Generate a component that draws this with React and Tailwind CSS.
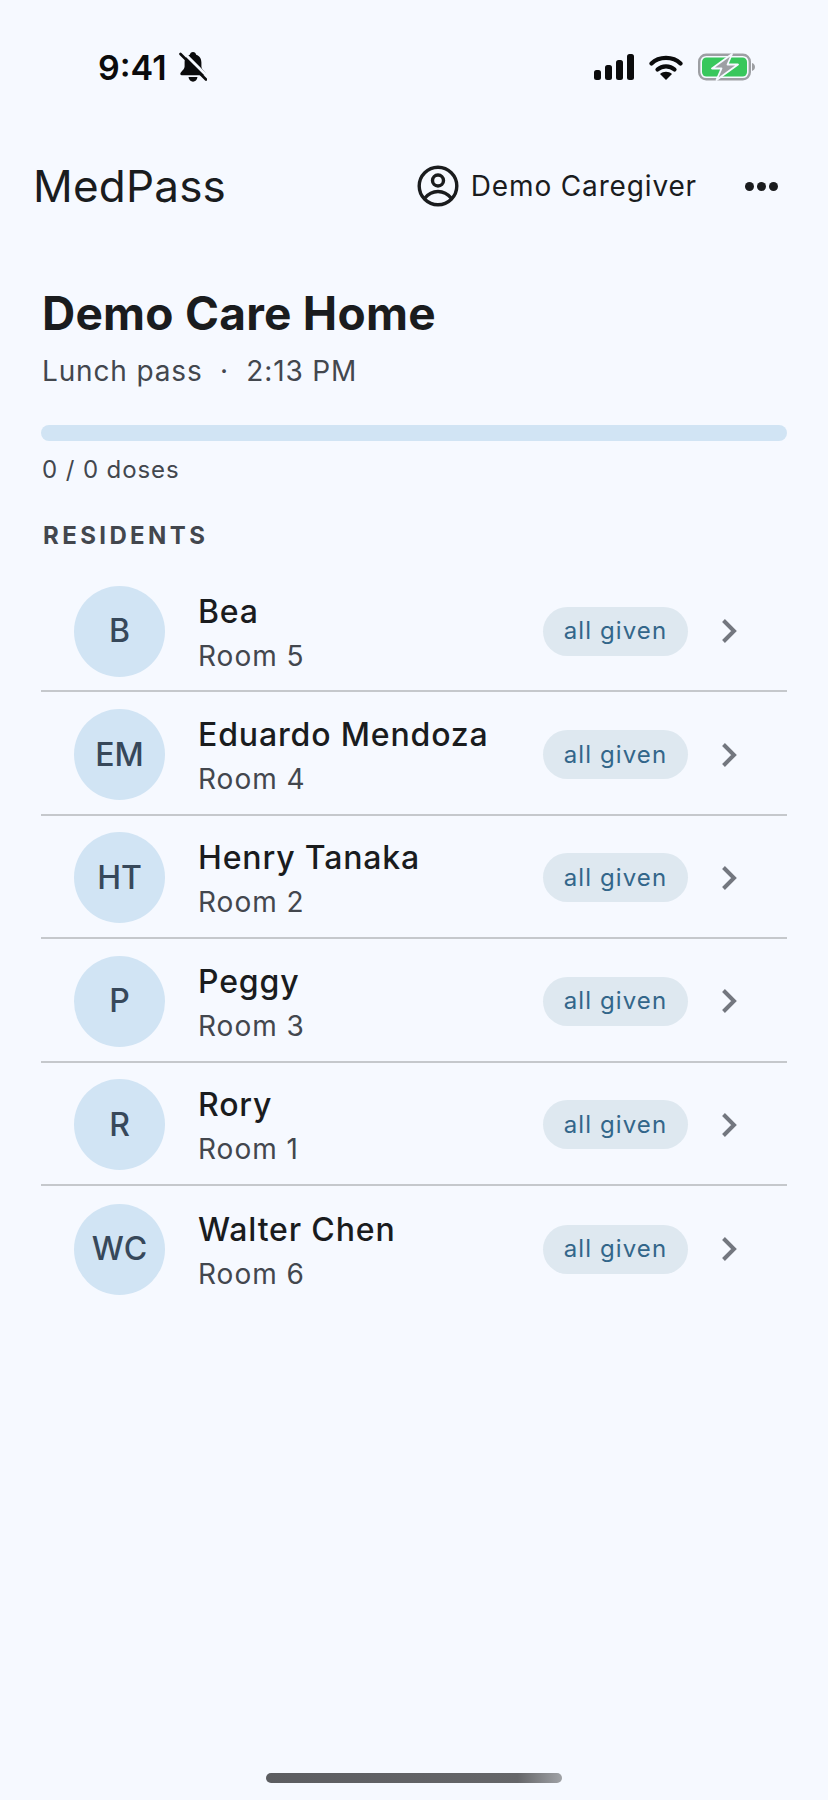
const residents = [
  { initials: 'B', name: 'Bea', room: 'Room 5' },
  { initials: 'EM', name: 'Eduardo Mendoza', room: 'Room 4' },
  { initials: 'HT', name: 'Henry Tanaka', room: 'Room 2' },
  { initials: 'P', name: 'Peggy', room: 'Room 3' },
  { initials: 'R', name: 'Rory', room: 'Room 1' },
  { initials: 'WC', name: 'Walter Chen', room: 'Room 6' },
];

const BellOff = () => (
  <svg width="28" height="30" viewBox="0 0 28 30" className="ml-[12px]">
    <path d="M14 0c-1.700 0-2.900 1.200-3.200 2.700C7.200 3.900 5.600 7 5.600 10.500v4c0 2-1.800 3.700-3.800 6-1 1.200-.5 2.800 1 2.800h22.400c1.500 0 2-1.600 1-2.800-2-2.300-3.800-4-3.800-6v-4c0-3.500-1.600-6.600-5.200-7.800C16.900 1.200 15.700 0 14 0z" fill="#0b0b0c" />
    <path d="M9.500 25h9c-.4 2.900-2.300 4.700-4.500 4.700S9.900 27.900 9.500 25z" fill="#0b0b0c" />
    <path d="M4 0l26 26" stroke="#f6f9ff" strokeWidth="3" />
    <path d="M1.500 2l25.500 25.500" stroke="#0b0b0c" strokeWidth="2.600" strokeLinecap="round" />
  </svg>
);

const StatusIcons = () => (
  <div className="flex items-center gap-[15px]">
    <svg width="40" height="26" viewBox="0 0 40 26">
      <rect x="0" y="16" width="7" height="10" rx="2.500" fill="#0b0b0c" />
      <rect x="11" y="11" width="7" height="15" rx="2.500" fill="#0b0b0c" />
      <rect x="22" y="6" width="7" height="20" rx="2.500" fill="#0b0b0c" />
      <rect x="33" y="0" width="7" height="26" rx="2.500" fill="#0b0b0c" />
    </svg>
    <svg width="34" height="26" viewBox="0 0 34 26">
      <path d="M2.500 9.500C10 2 24 2 31.500 9.500" fill="none" stroke="#0b0b0c" strokeWidth="4.200" strokeLinecap="round" />
      <path d="M8.500 15.500c4.500-4.300 12.500-4.300 17 0" fill="none" stroke="#0b0b0c" strokeWidth="4.200" strokeLinecap="round" />
      <path d="M17 26l-6-6c3.300-3 8.700-3 12 0z" fill="#0b0b0c" />
    </svg>
    <svg width="57" height="28" viewBox="0 0 57 28">
      <rect x="1.200" y="1.700" width="50.600" height="24.600" rx="7" fill="none" stroke="#9d9fa3" strokeWidth="2.400" />
      <rect x="4" y="4.500" width="45" height="19" rx="4.500" fill="#38c75c" />
      <path d="M54 10c1.800.6 3 2.200 3 4s-1.200 3.400-3 4z" fill="#9d9fa3" />
      <path d="M34 1L14 15.500h9.500L18.500 27 40 11.500H29.500z" fill="#9d9fa3" stroke="#f6f9ff" strokeWidth="1.800" strokeLinejoin="round" />
    </svg>
  </div>
);

const ProfileIcon = () => (
  <svg width="42" height="42" viewBox="0 0 42 42" fill="none" stroke="#1a1c1e" strokeWidth="3.400">
    <circle cx="21" cy="21" r="18.800" />
    <circle cx="21" cy="15.500" r="5.500" />
    <path d="M7.500 33.500C12 28 16 26.500 21 26.500s9 1.500 13.500 7" />
  </svg>
);

const Chevron = () => (
  <svg width="16" height="26" viewBox="0 0 16 26" fill="none">
    <path d="M2.500 2.500L13 13 2.500 23.500" stroke="#73777f" strokeWidth="4" />
  </svg>
);

const ResidentRow = ({ resident, last }) => (
  <div className={`h-[123.400px] flex items-center pt-[3px] pl-[33px] pr-[50px] ${last ? '' : 'border-b-2 border-[#c5c8cc]'}`}>
    <div className="w-[91px] h-[91px] rounded-full bg-[#d1e4f4] flex items-center justify-center text-[32px] font-medium text-[#37485a] shrink-0">
      {resident.initials}
    </div>
    <div className="ml-[33px] pt-[5px] flex-1">
      <div className="text-[32px] leading-[44px] font-medium text-[#1a1c1e] tracking-[0.85px]">{resident.name}</div>
      <div className="text-[28px] leading-[44px] text-[#43474e] tracking-[1px]">{resident.room}</div>
    </div>
    <div className="w-[145px] h-[49px] rounded-full bg-[#dee8f0] flex items-center justify-center text-[24px] text-[#33668a] tracking-[1.100px]">
      all given
    </div>
    <div className="ml-[33px]"><Chevron /></div>
  </div>
);

export default function App() {
  return (
    <div className="w-[828px] h-[1800px] bg-[#f6f9ff] flex flex-col font-['Inter',sans-serif] text-[#1a1c1e]">
      {/* Status bar */}
      <div className="h-[134px] flex items-center justify-between pl-[98px] pr-[73px]">
        <div className="flex items-center">
          <span className="text-[34px] font-semibold text-[#0b0b0c]">9:41</span>
          <BellOff />
        </div>
        <StatusIcons />
      </div>

      {/* App bar */}
      <div className="h-[104px] flex items-center pl-[33px] pr-[50px]">
        <div className="text-[44px] tracking-[0.2px] flex-1">MedPass</div>
        <ProfileIcon />
        <div className="ml-[12px] text-[28px] tracking-[0.85px]">Demo Caregiver</div>
        <div className="ml-[48px] flex gap-[3px]">
          <span className="w-[9px] h-[9px] rounded-full bg-[#1a1c1e]"></span>
          <span className="w-[9px] h-[9px] rounded-full bg-[#1a1c1e]"></span>
          <span className="w-[9px] h-[9px] rounded-full bg-[#1a1c1e]"></span>
        </div>
      </div>

      <div className="px-[41px] pt-[49px]">
        <h1 className="pl-px text-[46px] leading-[52px] font-bold tracking-[0.25px]">Demo Care Home</h1>
        <p className="pl-px mt-[14px] text-[28px] leading-[36px] text-[#43474e] tracking-[0.85px]">Lunch pass &nbsp;·&nbsp; 2:13 PM</p>
        <div className="mt-[36px] h-[16px] rounded-full bg-[#d1e4f4]"></div>
        <p className="pl-px mt-[13px] text-[24px] leading-[32px] text-[#43474e] tracking-[0.9px]">0 / 0 doses</p>
        <p className="pl-[2px] mt-[34px] text-[24px] leading-[32px] font-bold text-[#43474e] tracking-[3.400px]">RESIDENTS</p>
        <div className="mt-[17px]">
          {residents.map((r, i) => (
            <ResidentRow key={r.name} resident={r} last={i === residents.length - 1} />
          ))}
        </div>
      </div>

      {/* Home indicator */}
      <div className="mt-auto mb-[17px] mx-auto w-[296px] h-[10px] rounded-full bg-gradient-to-r from-[#5c5d61] via-[#656669] via-85% to-[#a0a2a6]"></div>
    </div>
  );
}
